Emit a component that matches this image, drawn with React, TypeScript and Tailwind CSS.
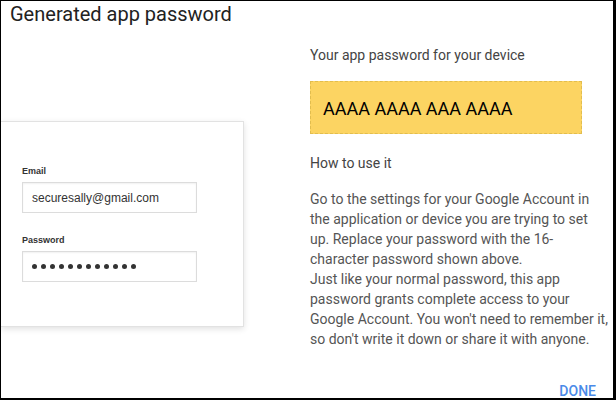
import React from "react";

export default function App() {
  const roboto = { fontFamily: "Roboto, 'Noto Sans', sans-serif" };
  const arial = { fontFamily: "'Liberation Sans', Arial, sans-serif" };
  return (
    <div
      className="w-[616px] h-[400px] box-border bg-white border-black border-t border-l border-r-[3px] border-b-2 overflow-hidden flex flex-col"
      style={roboto}
    >
      <div className="pl-[9px] text-[20px] leading-[26px] text-[#222]">Generated app password</div>
      <div className="flex">
        <div className="w-[309px] shrink-0">
          <div
            className="mt-[94px] w-[243px] bg-white border border-l-0 border-[#e2e2e2] shadow-[0_2px_6px_rgba(0,0,0,0.12)] pt-[43px] pb-[44px] pl-[21px]"
            style={arial}
          >
            <div className="text-[9px] leading-[12px] font-bold text-[#333]">Email</div>
            <div className="mt-[5px] w-[175px] h-[31px] border border-[#dcdcdc] shadow-[inset_0_1px_2px_rgba(0,0,0,0.06)] flex items-center pl-[9px] text-[12px] text-[#333]">
              securesally@gmail.com
            </div>
            <div className="mt-[21px] text-[9px] leading-[12px] font-bold text-[#333]">Password</div>
            <div className="mt-[5px] w-[175px] h-[31px] border border-[#dcdcdc] shadow-[inset_0_1px_2px_rgba(0,0,0,0.06)] flex items-center pl-[9px] gap-[4px]">
              {Array.from({ length: 12 }).map((_, i) => (
                <span key={i} className="w-[5px] h-[5px] rounded-full bg-[#333]" />
              ))}
            </div>
          </div>
        </div>
        <div className="flex flex-col">
          <div className="mt-[18px] text-[14px] leading-[20px] text-[#444]">Your app password for your device</div>
          <div className="mt-[16px] w-[272px] h-[53px] box-border bg-[#fcd462] border border-dashed border-[#e2bd4e] pt-[15px] pl-[12px] text-[18px] leading-[24px] text-black">
            AAAA AAAA AAA AAAA
          </div>
          <div className="mt-[19px] text-[14px] leading-[20px] text-[#444]">How to use it</div>
          <div className="mt-[16px] text-[14px] leading-[20px] text-[#555] whitespace-nowrap">
            Go to the settings for your Google Account in
            <br />
            the application or device you are trying to set
            <br />
            up. Replace your password with the 16-
            <br />
            character password shown above.
            <br />
            Just like your normal password, this app
            <br />
            password grants complete access to your
            <br />
            Google Account. You won't need to remember it,
            <br />
            so don't write it down or share it with anyone.
          </div>
        </div>
      </div>
      <div className="mt-[32px] flex justify-end pr-[17px]">
        <span className="text-[14px] leading-[20px] font-medium text-[#4a8ae8]">DONE</span>
      </div>
    </div>
  );
}
